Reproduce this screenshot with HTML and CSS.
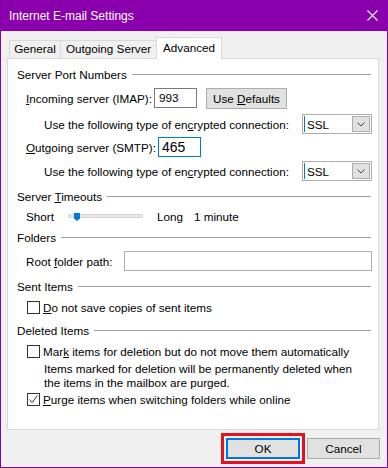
FILE: index.html
```html
<!DOCTYPE html>
<html lang="en">
<head>
  <meta charset="UTF-8">
  <title>Internet E-mail Settings</title>
  <link rel="stylesheet" href="styles.css">
</head>
<body>
  <div class="window">
    <div class="titlebar">
      <span>Internet E-mail Settings</span>
      <svg class="close" width="11" height="11" viewBox="0 0 11 11">
        <path d="M0.5 0.5 L10.5 10.5 M10.5 0.5 L0.5 10.5" stroke="#fff" stroke-width="1.1" fill="none"/>
      </svg>
    </div>

    <div class="dialog">
      <div class="tabs">
        <div class="tab tab-general">General</div>
        <div class="tab tab-outgoing">Outgoing Server</div>
        <div class="tab tab-advanced active">Advanced</div>
      </div>

      <div class="panel">
        <div class="group sp7"><span>Server Port Numbers</span></div>

        <div class="row sp6">
          <label class="lbl lbl-in"><u>I</u>ncoming server (IMAP):</label>
          <div class="field port">993</div>
          <button class="btn btn-defaults">Use <u>D</u>efaults</button>
        </div>

        <div class="row sub sp6">
          <span class="lbl">Use the following type of en<u>c</u>rypted connection:</span>
          <div class="select"><span class="caret"></span>SSL<span class="arrow"><svg width="8" height="5" viewBox="0 0 8 5"><path d="M0.5 0.5 L4 4 L7.5 0.5" stroke="#444" fill="none"/></svg></span></div>
        </div>

        <div class="row sp3">
          <label class="lbl lbl-out"><u>O</u>utgoing server (SMTP):</label>
          <div class="field port focused">465</div>
        </div>

        <div class="row sub sp4">
          <span class="lbl">Use the following type of en<u>c</u>rypted connection:</span>
          <div class="select"><span class="caret"></span>SSL<span class="arrow"><svg width="8" height="5" viewBox="0 0 8 5"><path d="M0.5 0.5 L4 4 L7.5 0.5" stroke="#444" fill="none"/></svg></span></div>
        </div>

        <div class="group sp7"><span>Server <u>T</u>imeouts</span></div>

        <div class="row slim sp4">
          <span class="short">Short</span>
          <div class="track">
            <svg class="thumb" width="6" height="8" viewBox="0 0 6 8"><path d="M0 0 H6 V5.5 L3 8 L0 5.5 Z" fill="#0078d7"/></svg>
          </div>
          <span class="long">Long</span>
          <span>1 minute</span>
        </div>

        <div class="group sp5"><span>Folders</span></div>

        <div class="row sp6">
          <label class="lbl lbl-root">Root <u>f</u>older path:</label>
          <div class="field wide"></div>
        </div>

        <div class="group sp7"><span>Sent Items</span></div>

        <div class="row slim check-row sp5">
          <span class="check"></span>
          <span class="lbl"><u>D</u>o not save copies of sent items</span>
        </div>

        <div class="group sp7"><span>Deleted Items</span></div>

        <div class="row slim check-row sp5">
          <span class="check"></span>
          <span class="lbl">Mar<u>k</u> items for deletion but do not move them automatically</span>
        </div>

        <p class="note">Items marked for deletion will be permanently deleted when<br>the items in the mailbox are purged.</p>

        <div class="row slim check-row sp1">
          <span class="check"><svg width="11" height="11" viewBox="0 0 11 11"><path d="M1.5 5.5 L4 8.5 L9.5 1.5" stroke="#333" stroke-width="1" fill="none"/></svg></span>
          <span class="lbl"><u>P</u>urge items when switching folders while online</span>
        </div>
      </div>

      <div class="footer">
        <button class="btn btn-ok">OK</button>
        <button class="btn btn-cancel">Cancel</button>
      </div>
    </div>
  </div>
</body>
</html>
```

FILE: styles.css
```css
* {
  box-sizing: border-box;
}

body {
  margin: 0;
  font-family: "Liberation Sans", Arial, sans-serif;
  font-size: 11.7px;
  color: #000;
  background: #f0f0f0;
}

.window {
  width: 388px;
  height: 468px;
  border: 1px solid #8a00ac;
  border-top: none;
  background: #f0f0f0;
  display: flex;
  flex-direction: column;
}

.titlebar {
  height: 31px;
  flex-shrink: 0;
  background: #8a00ac;
  color: #fff;
  font-size: 12px;
  display: flex;
  align-items: center;
  justify-content: space-between;
  padding: 0 9px 0 8px;
}

.dialog {
  flex: 1;
  padding: 6px 8px 0 6px;
  display: flex;
  flex-direction: column;
}

/* tabs */
.tabs {
  display: flex;
  align-items: flex-end;
  height: 21px;
  padding-left: 2px;
}

.tab {
  height: 18px;
  border: 1px solid #d9d9d9;
  border-bottom: none;
  text-align: center;
  line-height: 16px;
  background: #f0f0f0;
  white-space: nowrap;
}

.tab + .tab {
  margin-left: -1px;
}

.tab-general { width: 52px; }
.tab-outgoing { width: 97px; }
.tab-advanced { width: 66px; }

.tab.active {
  height: 22px;
  line-height: 20px;
  background: #fff;
  margin-bottom: -1px;
  position: relative;
  z-index: 1;
}

/* panel */
.panel {
  height: 372px;
  background: #fff;
  border: 1px solid #d9d9d9;
  padding: 0 6px 0 9px;
}

.group {
  display: flex;
  align-items: center;
  height: 16px;
  gap: 5px;
  white-space: nowrap;
}

.group::after {
  content: "";
  flex: 1;
  height: 1px;
  background: #a0a0a0;
  margin-right: 1px;
}

.row {
  display: flex;
  align-items: center;
  height: 20px;
  padding-left: 9px;
}

.row.sub {
  padding-left: 27px;
  justify-content: space-between;
}

.row.slim {
  height: 16px;
}

.lbl {
  white-space: nowrap;
  flex-shrink: 0;
}

.sp1 { margin-top: 1px; }
.sp3 { margin-top: 3px; }
.sp4 { margin-top: 4px; }
.sp5 { margin-top: 5px; }
.sp6 { margin-top: 6px; }
.sp7 { margin-top: 7px; }

.lbl-in { width: 128px; }
.lbl-out { width: 132px; }
.lbl-root { width: 98px; }

.field {
  height: 20px;
  border: 1px solid #7a7a7a;
  background: #fff;
  padding: 0 4px;
  line-height: 18px;
  flex-shrink: 0;
}

.port {
  width: 43px;
}

.field.focused {
  border-color: #0078d7;
  font-size: 14px;
  padding: 0 3px;
}

.field.wide {
  flex: 1;
  flex-shrink: 1;
  border-color: #adadad;
}

.btn {
  font: inherit;
  color: #000;
  height: 21px;
  background: #e1e1e1;
  border: 1px solid #adadad;
  padding: 0;
  white-space: nowrap;
}

.btn-defaults {
  width: 81px;
  margin-left: 9px;
}

.select {
  width: 70px;
  height: 20px;
  flex-shrink: 0;
  border: 1px solid #adadad;
  background: #fff;
  display: flex;
  align-items: center;
  padding: 0 1px;
}

.caret {
  width: 1px;
  height: 16px;
  background: #0078d7;
  margin-right: 2px;
}

.arrow {
  margin-left: auto;
  width: 18px;
  height: 16px;
  background: #e1e1e1;
  border: 1px solid #adadad;
  display: flex;
  align-items: center;
  justify-content: center;
}

/* slider */
.short {
  width: 42px;
}

.track {
  width: 75px;
  height: 4px;
  background: #e7e7e7;
  border: 1px solid #d6d6d6;
  margin-right: 14px;
  position: relative;
}

.thumb {
  position: absolute;
  left: 5px;
  top: -2px;
}

.long {
  width: 37px;
}

/* checkboxes */
.check-row {
  padding-left: 10px;
}

.check {
  width: 13px;
  height: 13px;
  flex-shrink: 0;
  border: 1px solid #333;
  background: #fff;
  margin-right: 3px;
  display: flex;
}

.note {
  margin: 3px 0 0;
  padding-left: 27px;
  line-height: 14px;
  height: 28px;
}

/* footer */
.footer {
  display: flex;
  justify-content: flex-end;
  gap: 7px;
  margin-top: 8px;
  margin-right: -1px;
}

.btn-ok {
  width: 74px;
  border: 2px solid #0078d7;
  outline: 3px solid #e81123;
  outline-offset: 2px;
}

.btn-cancel {
  width: 73px;
}
```
